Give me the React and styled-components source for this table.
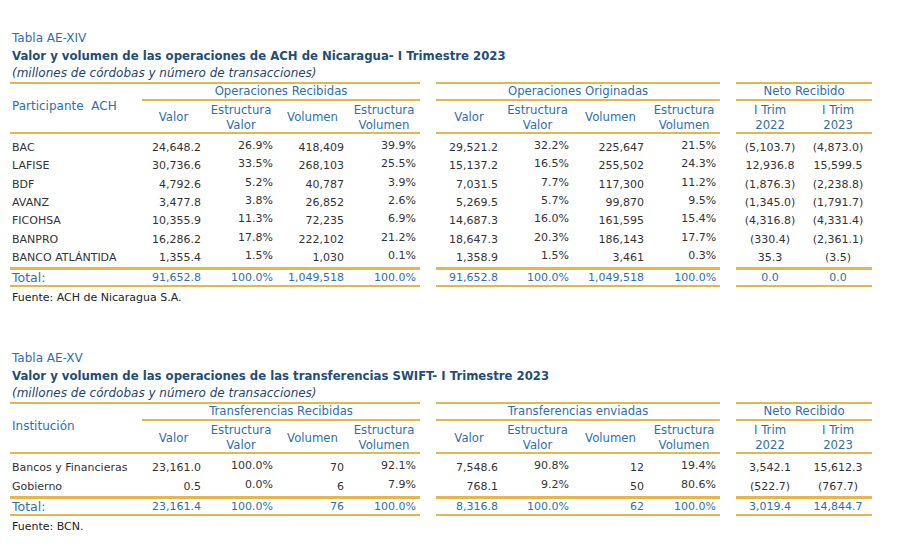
import styled, { createGlobalStyle } from "styled-components";

const GOLD = "#e6b64a";
const BLUE = "#2f6fab";

const COLS = [132, 63, 72, 71, 72, 16, 66, 71, 75, 72, 16, 68, 68];
const KINDS = ["num", "pct", "num", "pct"];

const ach = {
  label: "Tabla AE-XIV",
  title: "Valor y volumen de las operaciones de ACH de Nicaragua- I Trimestre 2023",
  corner: "Participante  ACH",
  groups: ["Operaciones Recibidas", "Operaciones Originadas"],
  rows: [
    ["BAC", ["24,648.2", "26.9%", "418,409", "39.9%"], ["29,521.2", "32.2%", "225,647", "21.5%"], ["(5,103.7)", "(4,873.0)"]],
    ["LAFISE", ["30,736.6", "33.5%", "268,103", "25.5%"], ["15,137.2", "16.5%", "255,502", "24.3%"], ["12,936.8", "15,599.5"]],
    ["BDF", ["4,792.6", "5.2%", "40,787", "3.9%"], ["7,031.5", "7.7%", "117,300", "11.2%"], ["(1,876.3)", "(2,238.8)"]],
    ["AVANZ", ["3,477.8", "3.8%", "26,852", "2.6%"], ["5,269.5", "5.7%", "99,870", "9.5%"], ["(1,345.0)", "(1,791.7)"]],
    ["FICOHSA", ["10,355.9", "11.3%", "72,235", "6.9%"], ["14,687.3", "16.0%", "161,595", "15.4%"], ["(4,316.8)", "(4,331.4)"]],
    ["BANPRO", ["16,286.2", "17.8%", "222,102", "21.2%"], ["18,647.3", "20.3%", "186,143", "17.7%"], ["(330.4)", "(2,361.1)"]],
    ["BANCO ATLÁNTIDA", ["1,355.4", "1.5%", "1,030", "0.1%"], ["1,358.9", "1.5%", "3,461", "0.3%"], ["35.3", "(3.5)"]],
  ],
  total: [["91,652.8", "100.0%", "1,049,518", "100.0%"], ["91,652.8", "100.0%", "1,049,518", "100.0%"], ["0.0", "0.0"]],
  source: "Fuente: ACH de Nicaragua S.A.",
};

const swift = {
  label: "Tabla AE-XV",
  title: "Valor y volumen de las operaciones de las transferencias SWIFT- I Trimestre 2023",
  corner: "Institución",
  groups: ["Transferencias Recibidas", "Transferencias enviadas"],
  rows: [
    ["Bancos y Financieras", ["23,161.0", "100.0%", "70", "92.1%"], ["7,548.6", "90.8%", "12", "19.4%"], ["3,542.1", "15,612.3"]],
    ["Gobierno", ["0.5", "0.0%", "6", "7.9%"], ["768.1", "9.2%", "50", "80.6%"], ["(522.7)", "(767.7)"]],
  ],
  total: [["23,161.4", "100.0%", "76", "100.0%"], ["8,316.8", "100.0%", "62", "100.0%"], ["3,019.4", "14,844.7"]],
  source: "Fuente: BCN.",
};

const GlobalStyle = createGlobalStyle`
  body {
    margin: 0;
    background: #fff;
    font-family: "DejaVu Sans", Verdana, sans-serif;
  }
`;

const Page = styled.div`
  padding: 30px 0 0 10px;
`;

const Section = styled.section`
  & + & {
    margin-top: 44px;
  }
`;

const TableLabel = styled.div`
  padding-left: 2px;
  font-size: 12px;
  line-height: 17px;
  color: ${BLUE};
`;

const TableTitle = styled.div`
  padding-left: 2px;
  font-size: 11.7px;
  font-weight: bold;
  line-height: 18px;
  color: #1f4e79;
  white-space: nowrap;
`;

const Units = styled.div`
  padding-left: 2px;
  font-size: 12px;
  font-style: italic;
  line-height: 17px;
  color: #23466e;
`;

const Sheet = styled.table`
  border-collapse: separate;
  border-spacing: 0;
  table-layout: fixed;
  width: ${COLS.reduce((a, b) => a + b, 0)}px;
  font-size: 11px;
  color: #333;
`;

const GroupHead = styled.th`
  padding: 0;
  border-top: 2px solid ${GOLD};
  border-bottom: 2px solid ${GOLD};
  font-weight: normal;
  font-size: 11.7px;
  line-height: 15px;
  color: ${BLUE};
  text-align: center;
  white-space: nowrap;
`;

const CornerHead = styled(GroupHead)`
  padding: 0 0 4px 2px;
  font-size: 12px;
  text-align: left;
  vertical-align: middle;
  white-space: pre;
`;

const ColHead = styled.th`
  padding: 2px 0 0;
  border-bottom: 2px solid ${GOLD};
  font-weight: normal;
  font-size: 11.7px;
  line-height: 14.5px;
  color: ${BLUE};
  text-align: center;
  vertical-align: middle;
`;

const Gap = styled.td`
  padding: 0;
`;

const GapHead = styled.th`
  padding: 0;
`;

const BodyRow = styled.tr`
  &:first-child td {
    padding-top: 5px;
  }
`;

const Cell = styled.td`
  padding: 0 ${({ $align }) => ($align === "right" ? "4px" : "0")} 0
    ${({ $align }) => ($align === "left" ? "2px" : "0")};
  padding-bottom: ${({ $raised }) => ($raised ? "4px" : "0")};
  line-height: ${({ $raised }) => ($raised ? "14.33px" : "18.33px")};
  text-align: ${({ $align }) => $align};
  vertical-align: middle;
  white-space: nowrap;
`;

const TotalCell = styled.td`
  padding: 0 ${({ $align }) => ($align === "right" ? "4px" : "0")} 0 0;
  border-top: 3px solid ${GOLD};
  border-bottom: 2px solid ${GOLD};
  line-height: 15px;
  color: ${BLUE};
  text-align: ${({ $align }) => $align};
  white-space: nowrap;
`;

const TotalLabel = styled(TotalCell)`
  padding-left: 2px;
  font-size: 12.5px;
`;

const Source = styled.div`
  margin-top: 3px;
  padding-left: 2px;
  font-size: 11px;
  line-height: 16px;
  color: #222;
`;

const Block = ({ values, raise }) =>
  values.map((v, i) => (
    <Cell key={i} $align="right" $raised={raise && KINDS[i] === "pct"}>
      {v}
    </Cell>
  ));

const TwoLine = ({ top, bottom }) => (
  <>
    {top}
    <br />
    {bottom}
  </>
);

const SubHeads = () => (
  <>
    <ColHead>Valor</ColHead>
    <ColHead>
      <TwoLine top="Estructura" bottom="Valor" />
    </ColHead>
    <ColHead>Volumen</ColHead>
    <ColHead>
      <TwoLine top="Estructura" bottom="Volumen" />
    </ColHead>
  </>
);

const Table = ({ data }) => (
  <Section>
    <TableLabel>{data.label}</TableLabel>
    <TableTitle>{data.title}</TableTitle>
    <Units>(millones de córdobas y número de transacciones)</Units>
    <Sheet>
      <colgroup>
        {COLS.map((w, i) => (
          <col key={i} style={{ width: w }} />
        ))}
      </colgroup>
      <thead>
        <tr>
          <CornerHead rowSpan={2}>{data.corner}</CornerHead>
          <GroupHead colSpan={4}>{data.groups[0]}</GroupHead>
          <GapHead />
          <GroupHead colSpan={4}>{data.groups[1]}</GroupHead>
          <GapHead />
          <GroupHead colSpan={2}>Neto Recibido</GroupHead>
        </tr>
        <tr>
          <SubHeads />
          <GapHead />
          <SubHeads />
          <GapHead />
          <ColHead>
            <TwoLine top="I Trim" bottom="2022" />
          </ColHead>
          <ColHead>
            <TwoLine top="I Trim" bottom="2023" />
          </ColHead>
        </tr>
      </thead>
      <tbody>
        {data.rows.map(([name, recv, sent, net]) => (
          <BodyRow key={name}>
            <Cell $align="left">{name}</Cell>
            <Block values={recv} raise />
            <Gap />
            <Block values={sent} raise />
            <Gap />
            {net.map((v, i) => (
              <Cell key={i} $align="center">
                {v}
              </Cell>
            ))}
          </BodyRow>
        ))}
      </tbody>
      <tfoot>
        <tr>
          <TotalLabel $align="left">Total:</TotalLabel>
          {data.total[0].map((v, i) => (
            <TotalCell key={i} $align="right">
              {v}
            </TotalCell>
          ))}
          <Gap />
          {data.total[1].map((v, i) => (
            <TotalCell key={i} $align="right">
              {v}
            </TotalCell>
          ))}
          <Gap />
          {data.total[2].map((v, i) => (
            <TotalCell key={i} $align="center">
              {v}
            </TotalCell>
          ))}
        </tr>
      </tfoot>
    </Sheet>
    <Source>{data.source}</Source>
  </Section>
);

export default function App() {
  return (
    <>
      <GlobalStyle />
      <Page>
        <Table data={ach} />
        <Table data={swift} />
      </Page>
    </>
  );
}
